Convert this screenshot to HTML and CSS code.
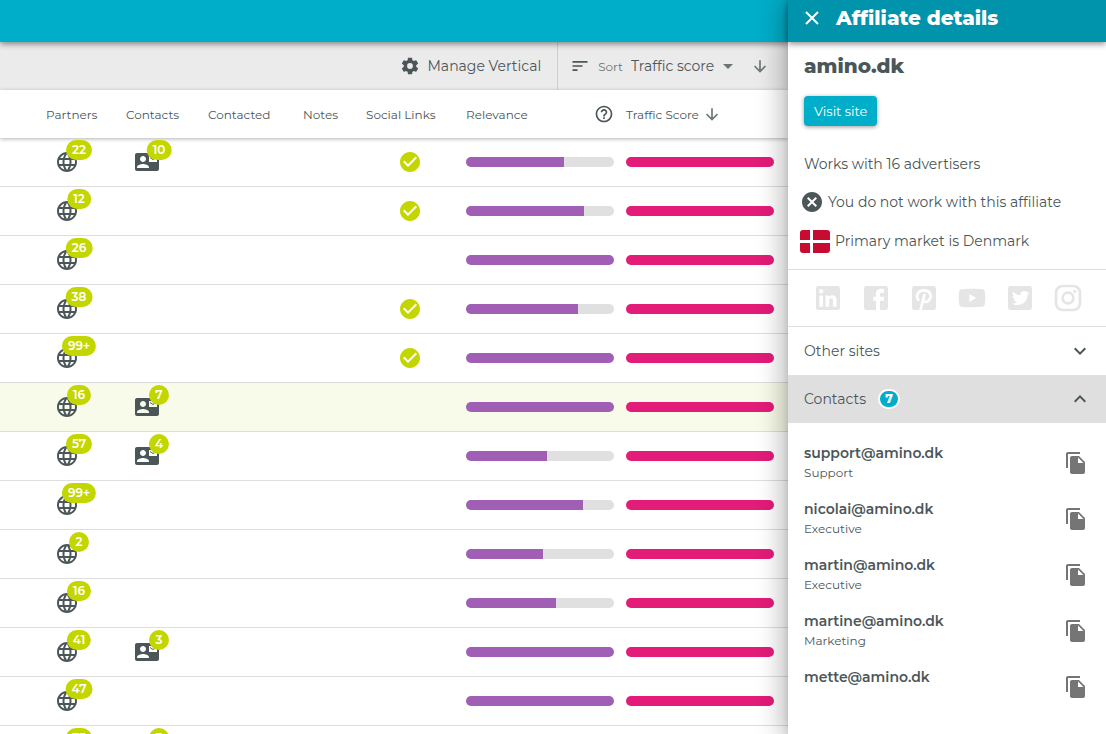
FILE: index.html
```html
<!DOCTYPE html>
<html lang="en">
<head>
<meta charset="utf-8">
<meta name="viewport" content="width=device-width, initial-scale=1">
<title>Affiliate details</title>
<link rel="stylesheet" href="styles.css">
</head>
<body>
<svg class="sprite" aria-hidden="true">
  <symbol id="globe" viewBox="0 0 24 24"><path d="M11.99 2C6.47 2 2 6.48 2 12s4.47 10 9.99 10C17.52 22 22 17.52 22 12S17.52 2 11.99 2zm6.93 6h-2.95c-.32-1.25-.78-2.45-1.38-3.56 1.84.63 3.37 1.91 4.33 3.56zM12 4.04c.83 1.2 1.48 2.53 1.91 3.96h-3.82c.43-1.43 1.08-2.76 1.91-3.96zM4.26 14C4.1 13.36 4 12.69 4 12s.1-1.36.26-2h3.38c-.08.66-.14 1.32-.14 2s.06 1.34.14 2H4.26zm.82 2h2.95c.32 1.25.78 2.45 1.38 3.56-1.84-.63-3.37-1.9-4.33-3.56zm2.95-8H5.08c.96-1.66 2.49-2.93 4.33-3.56C8.81 5.55 8.35 6.75 8.03 8zM12 19.96c-.83-1.2-1.48-2.53-1.91-3.96h3.82c-.43 1.43-1.08 2.76-1.91 3.96zM14.34 14H9.66c-.09-.66-.16-1.32-.16-2s.07-1.35.16-2h4.68c.09.65.16 1.32.16 2s-.07 1.34-.16 2zm.25 5.56c.6-1.11 1.06-2.31 1.38-3.56h2.95c-.96 1.65-2.49 2.93-4.33 3.56zM16.36 14c.08-.66.14-1.32.14-2s-.06-1.34-.14-2h3.38c.16.64.26 1.31.26 2s-.1 1.36-.26 2h-3.38z"/></symbol>
  <symbol id="card" viewBox="0 0 24 24"><path d="M21 8V7l-3 2-3-2v1l3 2 3-2zm1-5H2C.9 3 0 3.9 0 5v14c0 1.1.9 2 2 2h20c1.1 0 1.99-.9 1.99-2L24 5c0-1.1-.9-2-2-2zM8 6c1.66 0 3 1.34 3 3s-1.34 3-3 3-3-1.34-3-3 1.34-3 3-3zm6 12H2v-1c0-2 4-3.1 6-3.1s6 1.1 6 3.1v1zm8-6h-8V6h8v6z"/></symbol>
  <symbol id="check" viewBox="0 0 24 24"><path d="M12 2C6.5 2 2 6.5 2 12S6.5 22 12 22 22 17.500 22 12 17.500 2 12 2M10 17L5 12L6.410 10.590L10 14.170L17.590 6.580L19 8L10 17Z"/></symbol>
  <symbol id="arrow-down" viewBox="0 0 24 24"><path d="M11 5v11.200l-4.900-4.900-1.400 1.400L12 20l7.300-7.300-1.400-1.400-4.900 4.900V5z"/></symbol>
  <symbol id="copy" viewBox="0 0 24 24"><path d="M16 1H4c-1.100 0-2 .9-2 2v14h2V3h12V1zm-1 4l6 6v10c0 1.100-.9 2-2 2H7.990C6.890 23 6 22.100 6 21l.01-14c0-1.100.89-2 1.990-2h7zm-1 7h5.500L14 6.500V12z"/></symbol>
  <symbol id="chevron" viewBox="0 0 24 24"><path d="M7.410 8.580L12 13.170l4.590-4.590L18 10l-6 6-6-6z"/></symbol>
</svg>

<div class="app">
  <main class="main">
    <header class="topbar"></header>
    <div class="toolbar">
      <button class="tool manage" type="button">
        <svg class="icon-cog" viewBox="0 0 24 24"><path d="M12 15.500A3.500 3.500 0 0 1 8.500 12 3.500 3.500 0 0 1 12 8.500a3.500 3.500 0 0 1 3.500 3.500 3.500 3.500 0 0 1-3.500 3.500m7.430-2.530c.04-.32.07-.64.07-.97s-.03-.66-.07-1l2.110-1.630c.19-.15.24-.42.12-.64l-2-3.460c-.12-.22-.39-.31-.61-.22l-2.490 1c-.52-.39-1.060-.73-1.690-.98l-.37-2.650A.506.506 0 0 0 14 2h-4c-.25 0-.46.18-.5.420l-.37 2.650c-.63.25-1.170.59-1.690.98l-2.490-1c-.22-.09-.49 0-.61.22l-2 3.460c-.13.22-.07.49.12.64L4.570 11c-.04.34-.07.67-.07 1s.03.65.07.97l-2.110 1.660c-.19.15-.25.42-.12.64l2 3.460c.12.22.39.300.61.22l2.490-1.010c.52.4 1.060.74 1.690.99l.37 2.650c.04.24.25.420.5.420h4c.25 0 .46-.18.5-.42l.37-2.650c.63-.26 1.170-.59 1.690-.99l2.490 1.010c.22.08.49 0 .61-.22l2-3.460c.12-.22.07-.49-.12-.64z"/></svg>
        Manage Vertical
      </button>
      <div class="sort">
        <svg class="icon-sort" viewBox="0 0 24 24"><path d="M3 18h6v-2H3v2zM3 6v2h18V6H3zm0 7h12v-2H3v2z"/></svg>
        <label class="sort-label" for="sort">Sort</label>
        <span class="select-wrap">
          <select id="sort" class="sort-select"><option>Traffic score</option></select>
          <svg class="caret" viewBox="0 0 10 5"><path d="M0 0h10L5 5z"/></svg>
        </span>
        <button class="tool" type="button" aria-label="Sort direction"><svg class="icon-arrow"><use href="#arrow-down"/></svg></button>
      </div>
    </div>

    <table class="grid">
      <colgroup><col><col class="c-contacts"><col class="c-contacted"><col class="c-notes"><col class="c-social"><col class="c-bar"><col class="c-score"></colgroup>
      <thead>
        <tr>
          <th>Partners</th><th>Contacts</th><th>Contacted</th><th>Notes</th><th>Social Links</th>
          <th><span class="head-split">Relevance <svg class="icon-help" viewBox="0 0 24 24"><path d="M11 18h2v-2h-2v2zm1-16C6.480 2 2 6.480 2 12s4.480 10 10 10 10-4.480 10-10S17.520 2 12 2zm0 18c-4.410 0-8-3.590-8-8s3.590-8 8-8 8 3.590 8 8-3.590 8-8 8zm0-14c-2.210 0-4 1.790-4 4h2c0-1.100.9-2 2-2s2 .9 2 2c0 2-3 1.750-3 5h2c0-2.250 3-2.500 3-5 0-2.210-1.790-4-4-4z"/></svg></span></th>
          <th><span class="head-sorted">Traffic Score <svg class="icon-arrow"><use href="#arrow-down"/></svg></span></th>
        </tr>
      </thead>
      <tbody id="rows"></tbody>
    </table>
  </main>

  <aside class="panel">
    <header class="panel-head">
      <button class="close" type="button" aria-label="Close"><svg viewBox="0 0 14 14"><path d="M1 1l12 12M13 1L1 13"/></svg></button>
      <h1>Affiliate details</h1>
    </header>
    <section class="summary">
      <h2>amino.dk</h2>
      <button class="visit" type="button">Visit site</button>
      <p class="fact">Works with 16 advertisers</p>
      <p class="fact fact-status"><svg class="icon-no" viewBox="0 0 24 24"><path d="M12 2C6.470 2 2 6.470 2 12s4.470 10 10 10 10-4.470 10-10S17.530 2 12 2zm5 13.590L15.590 17 12 13.410 8.410 17 7 15.590 10.590 12 7 8.410 8.410 7 12 10.590 15.590 7 17 8.410 13.410 12 17 15.590z"/></svg>You do not work with this affiliate</p>
      <p class="fact fact-market"><svg class="flag" viewBox="0 0 30 23"><rect width="30" height="23" rx="3" fill="#c60c30"/><path d="M11.500 0v23M0 11.500h30" stroke="#fff" stroke-width="3"/></svg>Primary market is Denmark</p>
    </section>
    <nav class="social" aria-label="Social links">
      <a href="#" aria-label="LinkedIn"><svg viewBox="0 0 24 24"><path d="M19 3A2 2 0 0 1 21 5V19A2 2 0 0 1 19 21H5A2 2 0 0 1 3 19V5A2 2 0 0 1 5 3H19M18.500 18.500V13.200A3.260 3.260 0 0 0 15.240 9.940C14.390 9.940 13.400 10.460 12.920 11.240V10.130H10.130V18.500H12.920V13.570C12.920 12.800 13.540 12.170 14.310 12.170A1.400 1.400 0 0 1 15.710 13.570V18.500H18.500M6.880 8.560A1.680 1.680 0 0 0 8.560 6.880C8.560 5.950 7.810 5.190 6.880 5.190A1.690 1.690 0 0 0 5.190 6.880C5.190 7.810 5.950 8.560 6.880 8.560M8.270 18.500V10.130H5.500V18.500H8.270Z"/></svg></a>
      <a href="#" aria-label="Facebook"><svg viewBox="0 0 24 24"><path d="M5 3H19A2 2 0 0 1 21 5V19A2 2 0 0 1 19 21H5A2 2 0 0 1 3 19V5A2 2 0 0 1 5 3M18 5H15.500A3.500 3.500 0 0 0 12 8.500V11H10V14H12V21H15V14H18V11H15V9A1 1 0 0 1 16 8H18V5Z"/></svg></a>
      <a href="#" aria-label="Pinterest"><svg viewBox="0 0 24 24"><rect x="3" y="3" width="18" height="18" rx="2"/><path class="cut" d="M7.800 13.300C5.600 10.500 7.300 6.300 12 6.300C15.800 6.300 17.600 9 16.800 11.800C15.900 15 12.500 16 11.100 13.800M12.300 9.800L9.500 20.500"/></svg></a>
      <a href="#" aria-label="YouTube"><svg viewBox="0 0 24 24"><path d="M10 15L15.190 12L10 9V15M21.560 7.170C21.690 7.640 21.780 8.270 21.840 9.070C21.910 9.870 21.940 10.560 21.940 11.160L22 12C22 14.190 21.840 15.800 21.560 16.830C21.310 17.730 20.730 18.310 19.830 18.560C19.360 18.690 18.500 18.780 17.180 18.840C15.880 18.910 14.690 18.940 13.590 18.940L12 19C7.810 19 5.200 18.840 4.170 18.560C3.270 18.310 2.690 17.730 2.440 16.830C2.310 16.360 2.220 15.730 2.160 14.930C2.090 14.130 2.060 13.440 2.060 12.840L2 12C2 9.810 2.160 8.200 2.440 7.170C2.690 6.270 3.270 5.690 4.170 5.440C4.640 5.310 5.500 5.220 6.820 5.160C8.120 5.090 9.310 5.060 10.410 5.060L12 5C16.190 5 18.800 5.160 19.830 5.440C20.730 5.690 21.310 6.270 21.560 7.170Z"/></svg></a>
      <a href="#" aria-label="Twitter"><svg viewBox="0 0 24 24"><path d="M17.710 9.330C18.190 8.930 18.750 8.450 19 7.920C18.590 8.130 18.100 8.260 17.560 8.330C18.060 7.970 18.470 7.500 18.680 6.860C18.160 7.140 17.630 7.380 16.970 7.500C15.420 5.630 11.710 7.150 12.370 9.950C9.760 9.790 8.170 8.610 6.850 7.160C6.100 8.380 6.750 10.230 7.640 10.740C7.180 10.710 6.830 10.570 6.500 10.410C6.540 11.950 7.390 12.690 8.580 13.090C8.220 13.160 7.820 13.180 7.440 13.120C7.810 14.190 8.580 14.860 9.900 15C9 15.760 7.340 16.290 6 16.080C7.150 16.810 8.460 17.390 10.280 17.310C14.690 17.110 17.640 13.950 17.710 9.330M5 3H19A2 2 0 0 1 21 5V19A2 2 0 0 1 19 21H5A2 2 0 0 1 3 19V5A2 2 0 0 1 5 3Z"/></svg></a>
      <a href="#" aria-label="Instagram"><svg class="outline" viewBox="0 0 24 24"><rect x="3" y="3" width="18" height="18" rx="5"/><circle cx="12" cy="12" r="4"/><circle class="dot" cx="17" cy="7" r="1.200"/></svg></a>
    </nav>
    <button class="section" type="button" aria-expanded="false">Other sites <svg class="chevron"><use href="#chevron"/></svg></button>
    <button class="section section-open" type="button" aria-expanded="true">Contacts <span class="count">7</span><svg class="chevron"><use href="#chevron"/></svg></button>
    <ul class="contacts">
      <li><div><strong>support@amino.dk</strong><span>Support</span></div><button type="button" aria-label="Copy support@amino.dk"><svg><use href="#copy"/></svg></button></li>
      <li><div><strong>nicolai@amino.dk</strong><span>Executive</span></div><button type="button" aria-label="Copy nicolai@amino.dk"><svg><use href="#copy"/></svg></button></li>
      <li><div><strong>martin@amino.dk</strong><span>Executive</span></div><button type="button" aria-label="Copy martin@amino.dk"><svg><use href="#copy"/></svg></button></li>
      <li><div><strong>martine@amino.dk</strong><span>Marketing</span></div><button type="button" aria-label="Copy martine@amino.dk"><svg><use href="#copy"/></svg></button></li>
      <li><div><strong>mette@amino.dk</strong></div><button type="button" aria-label="Copy mette@amino.dk"><svg><use href="#copy"/></svg></button></li>
    </ul>
  </aside>
</div>
<script src="rows.js"></script>
</body>
</html>
```
FILE: styles.css
```css
* { box-sizing: border-box; }

body {
  margin: 0;
  font-family: Montserrat, Inter, "Open Sans", sans-serif;
  font-size: 12px;
  color: #4b5658;
  background: #fff;
}

button, select {
  font: inherit;
  color: inherit;
  background: none;
  border: 0;
  padding: 0;
  cursor: pointer;
}

svg { fill: currentColor; display: block; flex: none; }
.sprite { display: none; }

.app { display: flex; height: 100vh; overflow: hidden; }
.main { flex: 1; min-width: 0; overflow: hidden; }

.topbar {
  position: relative;
  z-index: 1;
  height: 42px;
  background: #00aeca;
  box-shadow: 0 2px 6px rgba(0, 0, 0, .45);
}

.toolbar {
  display: flex;
  justify-content: flex-end;
  height: 48px;
  background: #ebebeb;
  font-size: 14px;
}

.tool { display: flex; align-items: center; }
.manage { gap: 8px; padding-right: 16px; }
.icon-cog { width: 20px; height: 20px; }

.sort {
  display: flex;
  align-items: center;
  padding: 0 18px 0 12px;
  border-left: 1px solid #cfcfcf;
}
.icon-sort { width: 20px; height: 20px; margin-right: 8px; }
.sort-label { font-size: 12px; margin-right: 8px; color: #6c7577; }
.select-wrap { display: flex; align-items: center; gap: 8px; margin-right: 17px; }
.sort-select { appearance: none; outline: 0; }
.caret { width: 10px; height: 5px; color: #6c7577; pointer-events: none; }
.icon-arrow { width: 20px; height: 20px; color: #6c7577; }

.grid {
  width: 100%;
  table-layout: fixed;
  border-collapse: separate;
  border-spacing: 0;
}
.c-contacts { width: 82px; }
.c-contacted { width: 95px; }
.c-notes { width: 63px; }
.c-social { width: 100px; }
.c-bar { width: 160px; }
.c-score { width: 162px; }

.grid thead { position: relative; box-shadow: 0 1px 4px rgba(0, 0, 0, .3); }
.grid th {
  height: 48px;
  padding: 0;
  font-weight: 400;
  text-align: left;
  white-space: nowrap;
}
.grid td { height: 49px; padding: 0; border-bottom: 1px solid #dedede; }
.grid th:first-child { padding-left: 46px; }
.grid td:first-child { padding-left: 55px; }
.grid td:nth-child(2) { padding-left: 9px; }
.grid td:nth-child(5) { padding-left: 32px; }
.grid .selected td { background: #f8fbe9; }

.head-split { display: flex; align-items: center; justify-content: space-between; margin-right: 12px; }
.icon-help { width: 20px; height: 20px; }
.head-sorted { display: flex; align-items: center; gap: 3px; }

.marker { position: relative; width: 24px; }
.marker svg, .ok { width: 24px; height: 24px; }
.ok { color: #c4d600; }
.badge {
  position: absolute;
  top: -10px;
  left: 24px;
  transform: translateX(-50%);
  min-width: 20px;
  padding: 0 6px;
  border-radius: 10px;
  background: #c4d600;
  color: #fff;
  font-size: 12px;
  font-weight: 600;
  line-height: 20px;
  text-align: center;
}

.bar { height: 10px; border-radius: 5px; background: #e0e0e0; overflow: hidden; margin-right: 12px; }
.bar-score { margin-right: 14px; }
.fill { height: 100%; background: #a05eb5; }
.bar-score .fill { background: #e31c79; }

.panel {
  position: relative;
  z-index: 2;
  flex: 0 0 318px;
  background: #fff;
  font-size: 14px;
  box-shadow: 0 8px 10px -5px rgba(0, 0, 0, .3), 0 0 24px 2px rgba(0, 0, 0, .2), 0 6px 30px 5px rgba(0, 0, 0, .14);
}
.panel-head {
  display: flex;
  align-items: center;
  gap: 17px;
  height: 42px;
  padding: 0 17px 6px;
  background: #0093ac;
  color: #fff;
  box-shadow: 0 2px 6px rgba(0, 0, 0, .45);
}
.close svg { width: 14px; height: 14px; fill: none; stroke: #fff; stroke-width: 2; }
h1, h2 { margin: 0; font-size: 20px; font-weight: 800; line-height: 24px; }

.summary { padding: 12px 16px 16px; border-bottom: 1px solid #dedede; }
.visit {
  display: block;
  height: 30px;
  margin: 18px 0 26px;
  padding: 0 10px;
  border-radius: 4px;
  background: #00aeca;
  color: #fff;
  font-size: 13px;
  box-shadow: 0 1px 4px rgba(0, 0, 0, .4);
}
.fact { display: flex; align-items: center; height: 24px; margin: 0; white-space: nowrap; }
.fact-status { gap: 4px; margin: 14px -4px 15px; }
.icon-no { width: 24px; height: 24px; }
.fact-market { gap: 5px; margin-left: -4px; }
.flag { width: 30px; height: 23px; }

.social {
  display: flex;
  gap: 16px;
  padding: 12px 0 12px 24px;
  border-bottom: 1px solid #dedede;
}
.social a { color: #e5e5e5; }
.social svg { width: 32px; height: 32px; }
.social .cut { fill: none; stroke: #fff; stroke-width: 2; stroke-linecap: round; }
.social .outline { fill: none; stroke: currentColor; stroke-width: 2; }
.social .dot { fill: currentColor; stroke: none; }

.section {
  display: flex;
  align-items: center;
  width: 100%;
  height: 48px;
  padding: 0 14px 0 16px;
}
.section-open { background: #dfdfdf; }
.section-open .chevron { transform: rotate(180deg); }
.chevron { width: 24px; height: 24px; margin-left: auto; }
.count {
  min-width: 22px;
  margin-left: 12px;
  border: 2px solid #fff;
  border-radius: 11px;
  background: #00aeca;
  color: #fff;
  font-size: 12px;
  font-weight: 800;
  line-height: 16px;
}

.contacts { margin: 0; padding: 12px 18px 0 16px; list-style: none; }
.contacts li { display: flex; justify-content: space-between; height: 56px; padding-top: 8px; }
.contacts strong, .contacts span { display: block; line-height: 20px; }
.contacts strong { font-weight: 600; }
.contacts span { font-size: 12px; }
.contacts button { height: 24px; margin-top: 8px; color: #757575; }
.contacts button svg { width: 24px; height: 24px; }
```
FILE: rows.js
```js
const rows = [
  { partners: "22", contacts: "10", social: true, relevance: 66 },
  { partners: "12", social: true, relevance: 80 },
  { partners: "26", relevance: 100 },
  { partners: "38", social: true, relevance: 76 },
  { partners: "99+", social: true, relevance: 100 },
  { partners: "16", contacts: "7", relevance: 100, selected: true },
  { partners: "57", contacts: "4", relevance: 55 },
  { partners: "99+", relevance: 79 },
  { partners: "2", relevance: 52 },
  { partners: "16", relevance: 61 },
  { partners: "41", contacts: "3", relevance: 100 },
  { partners: "47", relevance: 100 },
  { partners: "75", contacts: "3", relevance: 100 }
];

const marker = (icon, count) => count
  ? `<div class="marker"><svg><use href="#${icon}"/></svg><span class="badge">${count}</span></div>`
  : "";

document.getElementById("rows").innerHTML = rows.map(row => `
  <tr${row.selected ? ' class="selected"' : ""}>
    <td>${marker("globe", row.partners)}</td>
    <td>${marker("card", row.contacts)}</td>
    <td></td>
    <td></td>
    <td>${row.social ? '<svg class="ok"><use href="#check"/></svg>' : ""}</td>
    <td><div class="bar"><div class="fill" style="width: ${row.relevance}%"></div></div></td>
    <td><div class="bar bar-score"><div class="fill"></div></div></td>
  </tr>`).join("");
```
